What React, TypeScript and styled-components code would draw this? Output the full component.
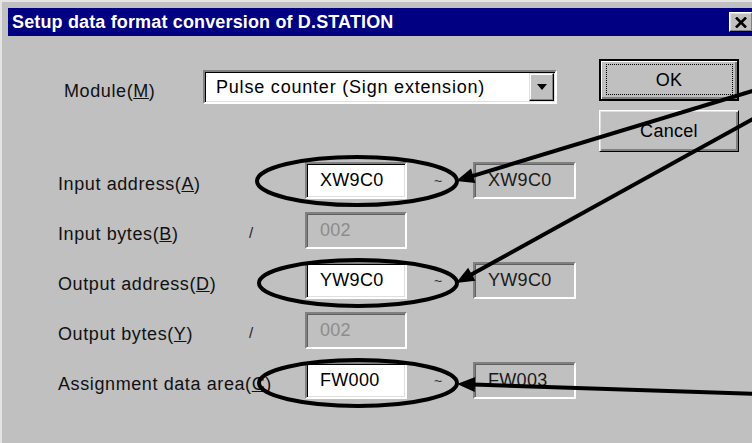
import React from "react";
import styled, { createGlobalStyle } from "styled-components";

const GlobalStyle = createGlobalStyle`
  html, body {
    margin: 0;
    padding: 0;
    background: #c0c0c0;
    overflow: hidden;
  }
  body {
    font-family: "Liberation Sans", Arial, sans-serif;
    color: #000;
  }
`;

const Window = styled.div`
  position: relative;
  width: 764px;
  height: 443px;
  box-sizing: border-box;
  background: #c0c0c0;
  border-top: 2px solid #e4e4e4;
  border-left: 2px solid #e4e4e4;
  padding: 6px 8px 0 6px;
`;

const TitleBar = styled.div`
  height: 28px;
  background: #000080;
  display: flex;
  align-items: center;
  justify-content: space-between;
  padding: 0 3px 0 4px;
`;

const Title = styled.span`
  color: #fff;
  font-weight: bold;
  font-size: 18px;
  letter-spacing: 0.15px;
  white-space: nowrap;
`;

const CloseButton = styled.div`
  width: 24px;
  height: 20px;
  box-sizing: border-box;
  background: #c0c0c0;
  border: 1px solid;
  border-color: #fff #000 #000 #fff;
  box-shadow: inset -1px -1px #808080, inset 1px 1px #dfdfdf;
  display: flex;
  align-items: center;
  justify-content: center;
`;

const Client = styled.div`
  padding: 23px 0 0 50px;
`;

const TopSection = styled.div`
  display: flex;
  align-items: flex-start;
`;

const ModuleRow = styled.div`
  display: flex;
  align-items: center;
  margin-top: 11px;
  padding-left: 6px;
`;

const Label = styled.div<{ $width?: number }>`
  ${(p) => (p.$width ? `width: ${p.$width}px;` : "")}
  font-size: 18px;
  letter-spacing: 0.6px;
  padding-top: 8px;
  white-space: nowrap;
  color: #111;
`;

const Combo = styled.div`
  width: 354px;
  height: 34px;
  box-sizing: border-box;
  display: flex;
  align-items: stretch;
  background: #fff;
  border: 2px solid;
  border-color: #808080 #fff #fff #808080;
  box-shadow: inset 1px 1px #000, inset -1px -1px #dfdfdf;
`;

const ComboText = styled.div`
  flex: 1;
  display: flex;
  align-items: center;
  padding-left: 11px;
  font-size: 18px;
  letter-spacing: 0.8px;
  white-space: nowrap;
`;

const DropButton = styled.div`
  width: 25px;
  margin: 1px 1px 1px 0;
  box-sizing: border-box;
  background: #c0c0c0;
  border: 1px solid;
  border-color: #dfdfdf #000 #000 #dfdfdf;
  box-shadow: inset -1px -1px #808080, inset 1px 1px #fff;
  display: flex;
  align-items: center;
  justify-content: center;
`;

const ButtonColumn = styled.div`
  margin-left: 42px;
  display: flex;
  flex-direction: column;
  gap: 9px;
`;

const Button = styled.div<{ $default?: boolean }>`
  position: relative;
  width: 140px;
  height: 42px;
  box-sizing: border-box;
  display: flex;
  align-items: center;
  justify-content: center;
  font-size: 18px;
  letter-spacing: 0.3px;
  background: #c0c0c0;
  border: ${(p) => (p.$default ? "2px solid #000" : "1px solid")};
  border-color: ${(p) => (p.$default ? "#000" : "#fff #000 #000 #fff")};
  box-shadow: ${(p) =>
    p.$default
      ? "inset 1px 1px #fff, inset -2px -2px #808080"
      : "inset 1px 1px #dfdfdf, inset -2px -2px #808080"};
`;

const FocusRect = styled.div`
  position: absolute;
  inset: 3px 4px 4px 5px;
  border: 1px dotted #000;
`;

const FormGrid = styled.div`
  display: grid;
  grid-template-columns: 190px 57px 102px 66px 103px;
  grid-auto-rows: 37px;
  row-gap: 13px;
  margin-top: 10px;
  align-items: center;
`;

const Slash = styled.div`
  font-size: 15px;
  padding-left: 1px;
  padding-top: 4px;
  color: #222;
`;

const Tilde = styled.div`
  font-size: 14px;
  text-align: center;
  padding-right: 4px;
  color: #333;
`;

type Variant = "edit" | "readonly" | "disabled";

const Field = styled.div<{ $variant: Variant }>`
  height: 37px;
  box-sizing: border-box;
  display: flex;
  align-items: center;
  padding-left: 13px;
  font-size: 18px;
  letter-spacing: 0.3px;
  white-space: nowrap;
  border: 2px solid;
  border-color: #808080 #fff #fff #808080;
  box-shadow: ${(p) =>
    p.$variant === "edit"
      ? "inset 1px 1px #000, inset -1px -1px #dfdfdf"
      : "inset 1px 1px #606060"};
  background: ${(p) => (p.$variant === "edit" ? "#fff" : "#c0c0c0")};
  color: ${(p) =>
    p.$variant === "disabled" ? "#8c8c8c" : p.$variant === "readonly" ? "#1a1a1a" : "#000"};
`;

const Overlay = styled.svg`
  position: absolute;
  top: 0;
  left: 0;
  pointer-events: none;
`;

type Row = {
  label: string;
  key: string;
  slash?: boolean;
  value: string;
  variant: Variant;
  end?: string;
};

const rows: Row[] = [
  { label: "Input address(", key: "A", value: "XW9C0", variant: "edit", end: "XW9C0" },
  { label: "Input bytes(", key: "B", slash: true, value: "002", variant: "disabled" },
  { label: "Output address(", key: "D", value: "YW9C0", variant: "edit", end: "YW9C0" },
  { label: "Output bytes(", key: "Y", slash: true, value: "002", variant: "disabled" },
  { label: "Assignment data area(", key: "C", value: "FW000", variant: "edit", end: "FW003" },
];

type Arrow = { from: [number, number]; tip: [number, number] };

const arrows: Arrow[] = [
  { from: [760, 86], tip: [454, 179] },
  { from: [760, 112], tip: [454, 281] },
  { from: [760, 392], tip: [455, 382] },
];

function head(a: Arrow) {
  const [fx, fy] = a.from;
  const [tx, ty] = a.tip;
  const len = Math.hypot(fx - tx, fy - ty);
  const ux = (fx - tx) / len;
  const uy = (fy - ty) / len;
  const bx = tx + ux * 18;
  const by = ty + uy * 18;
  const pts = [
    [tx, ty],
    [bx - uy * 7.5, by + ux * 7.5],
    [bx + uy * 7.5, by - ux * 7.5],
  ];
  return { base: [bx + ux * -2, by + uy * -2], points: pts.map((p) => p.join(",")).join(" ") };
}

export default function App(): React.ReactElement {
  return (
    <>
      <GlobalStyle />
      <Window>
        <TitleBar>
          <Title>Setup data format conversion of D.STATION</Title>
          <CloseButton>
            <svg width="12" height="11" viewBox="0 0 12 11">
              <path d="M1 0.5 L11 10.5 M11 0.5 L1 10.5" stroke="#000" strokeWidth="2.6" />
            </svg>
          </CloseButton>
        </TitleBar>
        <Client>
          <TopSection>
            <ModuleRow>
              <Label $width={139}>
                Module(<u>M</u>)
              </Label>
              <Combo>
                <ComboText>Pulse counter (Sign extension)</ComboText>
                <DropButton>
                  <svg width="10" height="6" viewBox="0 0 10 6">
                    <path d="M0 0 H10 L5 6 Z" fill="#000" />
                  </svg>
                </DropButton>
              </Combo>
            </ModuleRow>
            <ButtonColumn>
              <Button $default>
                <FocusRect />
                OK
              </Button>
              <Button>Cancel</Button>
            </ButtonColumn>
          </TopSection>
          <FormGrid>
            {rows.map((r) => (
              <React.Fragment key={r.key}>
                <Label>
                  {r.label}
                  <u>{r.key}</u>)
                </Label>
                <Slash>{r.slash ? "/" : ""}</Slash>
                <Field $variant={r.variant}>{r.value}</Field>
                <Tilde>{r.end ? "~" : ""}</Tilde>
                {r.end ? <Field $variant="readonly">{r.end}</Field> : <div />}
              </React.Fragment>
            ))}
          </FormGrid>
        </Client>
        <Overlay width="752" height="443" viewBox="0 0 752 443">
          <g fill="none" stroke="#000" strokeWidth="4">
            <ellipse cx="355" cy="179" rx="100" ry="24" />
            <ellipse cx="356" cy="281" rx="99" ry="23" />
            <ellipse cx="356" cy="381" rx="99" ry="23" />
          </g>
          {arrows.map((a, i) => {
            const h = head(a);
            return (
              <g key={i}>
                <line
                  x1={a.from[0]}
                  y1={a.from[1]}
                  x2={h.base[0]}
                  y2={h.base[1]}
                  stroke="#000"
                  strokeWidth="4"
                />
                <polygon points={h.points} fill="#000" />
              </g>
            );
          })}
        </Overlay>
      </Window>
    </>
  );
}
